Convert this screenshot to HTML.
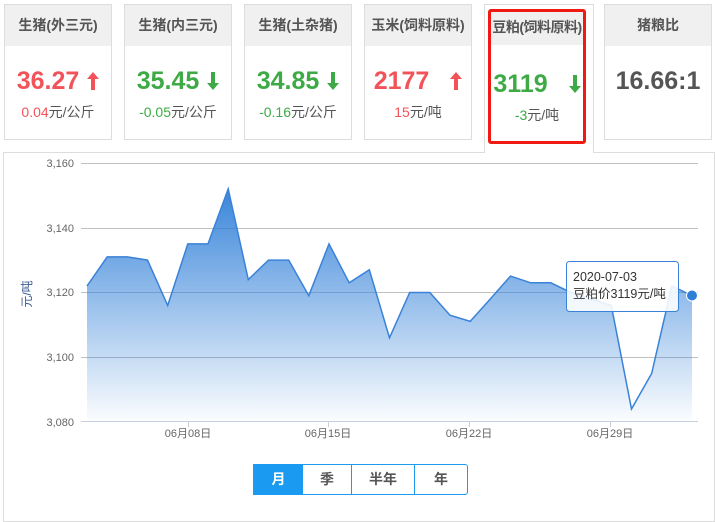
<!DOCTYPE html>
<html><head><meta charset="utf-8"><style>
body{margin:0;width:715px;height:508px;background:#fff;font-family:"Liberation Sans","Noto Sans CJK SC",sans-serif;position:relative;overflow:hidden}
.card{position:absolute;top:4px;width:108px;height:136px;border:1px solid #ddd;box-sizing:border-box;background:#fff}
.card .h{height:41px;background:#f0f0f0;text-align:center;line-height:41px;font-size:14px;font-weight:bold;color:#555;white-space:nowrap;overflow:hidden}
.card .v{text-align:center;font-size:25px;font-weight:bold;margin-top:20px;height:30px;line-height:30px;white-space:nowrap}
.card .s{text-align:center;font-size:14px;margin-top:6px;color:#555}
.r{color:#f25359}.g{color:#3eaa45}
.arr{display:inline-block;margin-left:8px;vertical-align:-1px}
</style></head><body>
<div class="card" style="left:4px"><div class="h">生猪(外三元)</div><div class="v r">36.27<svg class="arr" width="12" height="18" viewBox="0 0 12 18"><path d="M6,0 L12,7 L8,7 L8,18 L4,18 L4,7 L0,7Z" fill="#f25359"/></svg></div><div class="s"><span class="r">0.04</span>元/公斤</div></div>
<div class="card" style="left:124px"><div class="h">生猪(内三元)</div><div class="v g">35.45<svg class="arr" width="12" height="18" viewBox="0 0 12 18"><path d="M6,18 L12,11 L8,11 L8,0 L4,0 L4,11 L0,11Z" fill="#3eaa45"/></svg></div><div class="s"><span class="g">-0.05</span>元/公斤</div></div>
<div class="card" style="left:244px"><div class="h">生猪(土杂猪)</div><div class="v g">34.85<svg class="arr" width="12" height="18" viewBox="0 0 12 18"><path d="M6,18 L12,11 L8,11 L8,0 L4,0 L4,11 L0,11Z" fill="#3eaa45"/></svg></div><div class="s"><span class="g">-0.16</span>元/公斤</div></div>
<div class="card" style="left:364px"><div class="h">玉米(饲料原料)</div><div class="v r">2177 <svg class="arr" style="margin-left:14px" width="12" height="18" viewBox="0 0 12 18"><path d="M6,0 L12,7 L8,7 L8,18 L4,18 L4,7 L0,7Z" fill="#f25359"/></svg></div><div class="s"><span class="r">15</span>元/吨</div></div>
<div style="position:absolute;left:484px;top:4px;width:110px;height:149px;border:1px solid #ddd;border-bottom:none;box-sizing:border-box;background:#fff;z-index:2"></div>
<div class="card" style="left:488px;top:9px;width:98px;height:135px;border:3px solid #f01a12;border-radius:3px;z-index:3"><div class="h" style="height:33px;line-height:30px;letter-spacing:-0.5px;">豆粕(饲料原料)</div><div class="v g" style="margin-top:24px">3119 <svg class="arr" style="margin-left:14px" width="12" height="18" viewBox="0 0 12 18"><path d="M6,18 L12,11 L8,11 L8,0 L4,0 L4,11 L0,11Z" fill="#3eaa45"/></svg></div><div class="s"><span class="g">-3</span>元/吨</div></div>
<div class="card" style="left:604px"><div class="h">猪粮比</div><div class="v" style="color:#555">16.66:1</div></div>
<div style="position:absolute;left:3px;top:152px;width:712px;height:370px;border:1px solid #ddd;box-sizing:border-box"></div>
<svg style="position:absolute;left:0;top:0" width="715" height="508">
<defs><linearGradient id="gr" x1="0" y1="0" x2="0" y2="1"><stop offset="0" stop-color="#2f7fd8" stop-opacity="0.95"/><stop offset="1" stop-color="#2f7fd8" stop-opacity="0.02"/></linearGradient></defs>
<g stroke="#c0c0c0" stroke-width="1">
<line x1="81" y1="163.5" x2="698" y2="163.5"/><line x1="81" y1="228.5" x2="698" y2="228.5"/><line x1="81" y1="292.5" x2="698" y2="292.5"/><line x1="81" y1="357.5" x2="698" y2="357.5"/><line x1="81" y1="421.5" x2="698" y2="421.5" stroke="#c8d0e0"/>
<line x1="188.5" y1="421" x2="188.5" y2="427" stroke="#c8d0e0"/><line x1="328.5" y1="421" x2="328.5" y2="427" stroke="#c8d0e0"/><line x1="469.5" y1="421" x2="469.5" y2="427" stroke="#c8d0e0"/><line x1="610.5" y1="421" x2="610.5" y2="427" stroke="#c8d0e0"/>
</g>
<path d="M87,421 L87,286 107.2,256.9 127.3,256.9 147.5,260.1 167.7,305.5 187.8,243.9 208,243.9 228.2,188.9 248.3,279.6 268.5,260.1 288.7,260.1 308.8,295.7 329,243.9 349.2,282.8 369.3,269.8 389.5,337.8 409.7,292.5 429.8,292.5 450,315.2 470.2,321.4 490.3,299 510.5,276.1 530.7,282.8 550.8,282.8 571,292.5 591.2,299 611.3,305.5 631.5,409 651.7,373.4 671.8,286 692,295.7 L692,421Z" fill="url(#gr)"/>
<polyline points="87,286 107.2,256.9 127.3,256.9 147.5,260.1 167.7,305.5 187.8,243.9 208,243.9 228.2,188.9 248.3,279.6 268.5,260.1 288.7,260.1 308.8,295.7 329,243.9 349.2,282.8 369.3,269.8 389.5,337.8 409.7,292.5 429.8,292.5 450,315.2 470.2,321.4 490.3,299 510.5,276.1 530.7,282.8 550.8,282.8 571,292.5 591.2,299 611.3,305.5 631.5,409 651.7,373.4 671.8,286 692,295.7" fill="none" stroke="#3a82d8" stroke-width="1.5"/>
<circle cx="692" cy="295.5" r="5.5" fill="#2f7fd8" stroke="#fff" stroke-width="1"/>
<g font-size="11" fill="#666" text-anchor="end" font-family="Liberation Sans,sans-serif">
<text x="74" y="167">3,160</text><text x="74" y="232">3,140</text><text x="74" y="296">3,120</text><text x="74" y="361">3,100</text><text x="74" y="426">3,080</text></g>
<g font-size="11" fill="#666" text-anchor="middle" font-family="Liberation Sans,Noto Sans CJK SC,sans-serif">
<text x="188" y="437">06月08日</text><text x="328" y="437">06月15日</text><text x="469" y="437">06月22日</text><text x="610" y="437">06月29日</text></g>
<text transform="translate(31,294) rotate(-90)" font-size="12" fill="#3a5a90" text-anchor="middle" font-family="Liberation Sans,Noto Sans CJK SC,sans-serif">元/吨</text>
<rect x="566.5" y="261.5" width="112" height="50" rx="3" fill="#fff" fill-opacity="0.88" stroke="#3a82d8"/>
<text x="573" y="281" font-size="12.5" fill="#333" font-family="Liberation Sans,sans-serif">2020-07-03</text>
<text x="573" y="298" font-size="12.5" fill="#333" font-family="Liberation Sans,Noto Sans CJK SC,sans-serif">豆粕价3119元/吨</text>
</svg>
<div style="position:absolute;left:253px;top:464px;width:215px;height:31px;border:1px solid #1a9af0;box-sizing:border-box;border-radius:0 3px 3px 0;display:flex;font-size:14px;font-weight:bold;color:#555;background:#fff">
<div style="width:49px;background:#1a9af0;color:#fff;text-align:center;line-height:29px">月</div>
<div style="width:48px;border-right:1px solid #1a9af0;text-align:center;line-height:29px">季</div>
<div style="width:62px;border-right:1px solid #1a9af0;text-align:center;line-height:29px">半年</div>
<div style="flex:1;text-align:center;line-height:29px">年</div>
</div>
</body></html>
